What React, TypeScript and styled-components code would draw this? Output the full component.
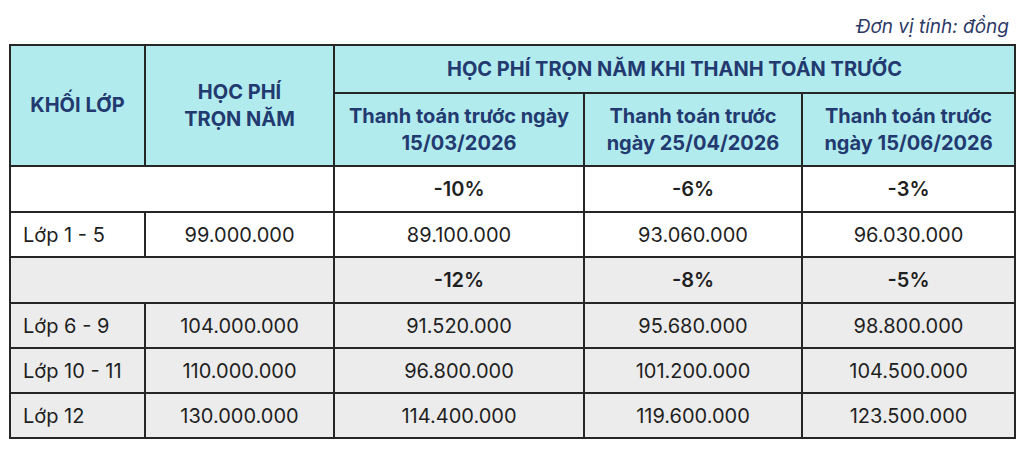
import styled, { createGlobalStyle } from "styled-components";

const GlobalStyle = createGlobalStyle`
  html, body {
    margin: 0;
    padding: 0;
    background: #ffffff;
  }
  body {
    font-family: Inter, "Noto Sans", "Liberation Sans", sans-serif;
  }
`;

const Page = styled.div`
  width: 1024px;
  padding: 0 9px 0 9px;
  box-sizing: border-box;
`;

const UnitNote = styled.div`
  height: 44px;
  box-sizing: border-box;
  padding-top: 15px;
  padding-right: 6px;
  text-align: right;
  font-size: 19px;
  line-height: 24px;
  font-style: italic;
  color: #2d3a66;
`;

const Table = styled.table`
  width: 1005px;
  border-collapse: collapse;
  table-layout: fixed;
  color: #1f1f1f;
  font-size: 20px;
`;

const HeadRow = styled.tr<{ $h: number }>`
  height: ${p => p.$h}px;
`;

const HeadCell = styled.th`
  padding: 0 6px;
  border: 2px solid #262626;
  background: #b1ebee;
  color: #223a70;
  font-weight: 700;
  font-size: 20px;
  line-height: 27px;
  text-align: center;
  vertical-align: middle;
  white-space: nowrap;
`;

const Row = styled.tr<{ $grey?: boolean; $h: number }>`
  height: ${p => p.$h}px;
  background: ${p => (p.$grey ? "#ececec" : "#ffffff")};
`;

const Cell = styled.td<{ $left?: boolean; $strong?: boolean }>`
  padding: 0 12px;
  border: 2px solid #262626;
  text-align: ${p => (p.$left ? "left" : "center")};
  font-weight: ${p => (p.$strong ? 600 : 400)};
  vertical-align: middle;
  line-height: 24px;
  white-space: nowrap;
`;

const widths = [135, 189, 250, 218, 213];

type Section = {
  discounts: string[];
  grey: boolean;
  rows: { grade: string; fee: string; prices: string[]; grey: boolean }[];
};

const sections: Section[] = [
  {
    discounts: ["-10%", "-6%", "-3%"],
    grey: false,
    rows: [
      { grade: "Lớp 1 - 5", fee: "99.000.000", prices: ["89.100.000", "93.060.000", "96.030.000"], grey: false },
    ],
  },
  {
    discounts: ["-12%", "-8%", "-5%"],
    grey: true,
    rows: [
      { grade: "Lớp 6 - 9", fee: "104.000.000", prices: ["91.520.000", "95.680.000", "98.800.000"], grey: true },
      { grade: "Lớp 10 - 11", fee: "110.000.000", prices: ["96.800.000", "101.200.000", "104.500.000"], grey: true },
      { grade: "Lớp 12", fee: "130.000.000", prices: ["114.400.000", "119.600.000", "123.500.000"], grey: true },
    ],
  },
];

const App = () => {
  return (
    <Page>
      <GlobalStyle />
      <UnitNote>Đơn vị tính: đồng</UnitNote>
      <Table>
        <colgroup>
          {widths.map((w, i) => (
            <col key={i} style={{ width: w }} />
          ))}
        </colgroup>
        <thead>
          <HeadRow $h={48}>
            <HeadCell rowSpan={2}>KHỐI LỚP</HeadCell>
            <HeadCell rowSpan={2}>HỌC PHÍ<br />TRỌN NĂM</HeadCell>
            <HeadCell colSpan={3}>HỌC PHÍ TRỌN NĂM KHI THANH TOÁN TRƯỚC</HeadCell>
          </HeadRow>
          <HeadRow $h={73}>
            <HeadCell>Thanh toán trước ngày<br />15/03/2026</HeadCell>
            <HeadCell>Thanh toán trước<br />ngày 25/04/2026</HeadCell>
            <HeadCell>Thanh toán trước<br />ngày 15/06/2026</HeadCell>
          </HeadRow>
        </thead>
        <tbody>
          {sections.map((s, si) => (
            <>
              <Row key={`d${si}`} $grey={s.grey} $h={46}>
                <Cell colSpan={2} />
                {s.discounts.map(d => (
                  <Cell key={d} $strong>{d}</Cell>
                ))}
              </Row>
              {s.rows.map(r => (
                <Row key={r.grade} $grey={r.grey} $h={45}>
                  <Cell $left>{r.grade}</Cell>
                  <Cell>{r.fee}</Cell>
                  {r.prices.map(p => (
                    <Cell key={p}>{p}</Cell>
                  ))}
                </Row>
              ))}
            </>
          ))}
        </tbody>
      </Table>
    </Page>
  );
};

export default App;
